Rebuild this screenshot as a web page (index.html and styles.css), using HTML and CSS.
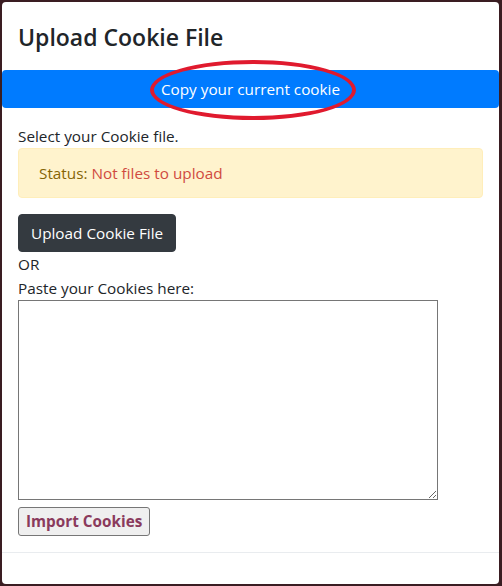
FILE: index.html
```html
<!DOCTYPE html>
<html lang="en">
<head>
    <meta charset="UTF-8">
    <meta name="viewport" content="width=device-width, initial-scale=1.0">
    <title>Upload Cookie File</title>
    <link rel="stylesheet" href="styles.css">
</head>
<body>
    <div class="modal">
        <div class="modal-header">
            <h4 class="modal-title">Upload Cookie File</h4>
        </div>

        <div class="copy-row">
            <button class="btn-copy">Copy your current cookie</button>
            <span class="mark"></span>
        </div>

        <div class="modal-body">
            <p class="hint">Select your Cookie file.</p>
            <div class="alert">Status: <span class="status">Not files to upload</span></div>

            <button class="btn-upload">Upload Cookie File</button>
            <p class="hint">OR</p>
            <p class="hint">Paste your Cookies here:</p>
            <textarea class="cookies"></textarea>
            <button class="btn-import">Import Cookies</button>
        </div>

        <div class="modal-footer"></div>
    </div>
</body>
</html>
```

FILE: styles.css
```css
html, body {
    height: 100%;
}

body {
    font-family: "Open Sans", Arial, sans-serif;
    font-size: 15.3px;
    line-height: 24px;
    color: #212529;
    background-color: #3a1d22;
    margin: 0;
    padding: 2px 3px 2px 2px;
    box-sizing: border-box;
}

.modal {
    background-color: #fff;
    border-radius: 4px;
    height: 100%;
    display: flex;
    flex-direction: column;
}

.modal-header {
    padding: 17px 16px 15px;
}

.modal-title {
    margin: 0;
    font-size: 23px;
    line-height: 36px;
    font-weight: 600;
}

.copy-row {
    position: relative;
}

.btn-copy {
    display: block;
    width: 100%;
    height: 38px;
    background-color: #007bff;
    color: #fff;
    font-family: inherit;
    font-size: 15.3px;
    border: none;
    border-radius: 4px;
    padding: 0;
}

.mark {
    position: absolute;
    left: 148px;
    top: -10px;
    width: 198px;
    height: 52px;
    border: 4px solid #e01a2e;
    border-radius: 50%;
}

.modal-body {
    padding: 16px;
    flex: 1;
}

.hint {
    margin: 0;
}

.alert {
    background-color: #fff3cd;
    border: 1px solid #ffeeba;
    border-radius: 4px;
    color: #856404;
    padding: 12px 20px;
    margin: 0 0 16px;
}

.status {
    color: #d04a3f;
}

.btn-upload {
    display: block;
    background-color: #343a40;
    color: #fff;
    font-family: inherit;
    font-size: 15.3px;
    line-height: 24px;
    border: 1px solid #343a40;
    border-radius: 4px;
    padding: 6px 12px;
}

.cookies {
    display: block;
    width: 420px;
    height: 200px;
    box-sizing: border-box;
    border: 1px solid #767676;
    margin: 0 0 7px;
    padding: 2px;
}

.btn-import {
    display: block;
    background-color: #efefef;
    color: #8a3a5c;
    font-family: inherit;
    font-size: 15.3px;
    font-weight: bold;
    line-height: 21px;
    border: 1px solid #767676;
    border-radius: 3px;
    padding: 3px 7px;
}

.modal-footer {
    border-top: 1px solid #e9ecef;
    height: 32px;
}
```
